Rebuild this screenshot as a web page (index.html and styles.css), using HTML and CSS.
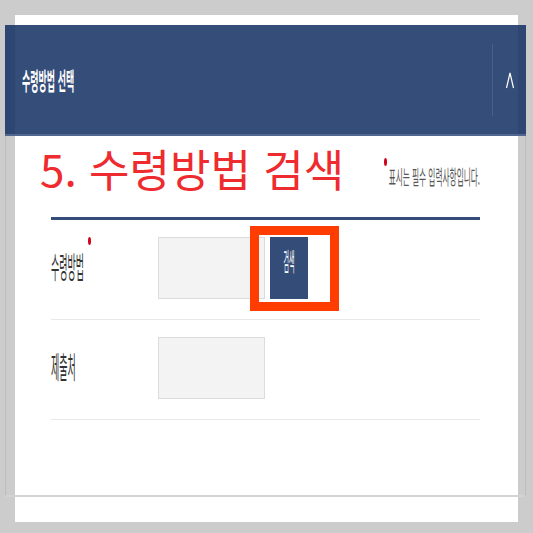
FILE: index.html
```html
<!DOCTYPE html>
<html lang="ko">
<head>
    <meta charset="UTF-8">
    <meta name="viewport" content="width=device-width, initial-scale=1.0">
    <title>수령방법 선택</title>
    <link rel="stylesheet" href="styles.css">
</head>
<body>
    <div class="sheet">
        <div class="panel">
            <div class="panel-header">
                <h2 class="tall header-title"><span>수령방법 선택</span></h2>
                <button class="toggle" type="button" aria-label="접기">
                    <svg width="10" height="20" viewBox="0 0 10 20">
                        <polyline points="1.5,18 5,3 8.5,18" fill="none" stroke="#ffffff" stroke-width="1.2"/>
                    </svg>
                </button>
            </div>

            <div class="panel-body">
                <div class="title-row">
                    <h1 class="step-title">5. 수령방법 검색</h1>
                    <p class="note">
                        <span class="req-dot"></span>
                        <span class="tall note-text"><span>표시는 필수 입력사항입니다.</span></span>
                    </p>
                </div>

                <div class="form">
                    <div class="form-row">
                        <div class="label">
                            <span class="tall label-text"><span>수령방법</span></span>
                            <span class="req-dot label-dot"></span>
                        </div>
                        <div class="field"></div>
                        <div class="search-wrap">
                            <button class="search-btn" type="button">
                                <span class="tall btn-text"><span>검색</span></span>
                            </button>
                            <span class="callout"></span>
                        </div>
                    </div>
                    <div class="form-row">
                        <div class="label">
                            <span class="tall label-text"><span>제출처</span></span>
                        </div>
                        <div class="field"></div>
                    </div>
                </div>
            </div>
        </div>
    </div>
</body>
</html>
```

FILE: styles.css
```css
body {
    margin: 0;
    background-color: #cccccc;
    font-family: "Noto Sans CJK KR", "Noto Sans", sans-serif;
}
.sheet {
    margin: 15px 0 0 15px;
    width: 503px;
    height: 507px;
    padding-top: 10px;
    box-sizing: border-box;
    background-color: #ffffff;
}
.panel {
    margin: 0 -8px 0 -10px;
}

/* narrow, tall text: small font stretched vertically */
.tall {
    display: inline-block;
    white-space: nowrap;
    line-height: 1.1;
}
.tall > span {
    display: inline-block;
}

.panel-header {
    display: flex;
    align-items: center;
    height: 111px;
    box-sizing: border-box;
    border-bottom: 2px solid #52678f;
    background-color: rgba(20, 48, 99, 0.86);
}
.header-title {
    margin: 4px 0 0 17px;
    font-size: 9px;
    font-weight: bold;
    color: #ffffff;
}
.header-title > span {
    transform: scaleY(2.7);
}
.toggle {
    margin-left: auto;
    width: 34px;
    height: 72px;
    padding: 0 0 0 1px;
    border: none;
    border-left: 1px solid rgba(255, 255, 255, 0.1);
    background: transparent;
    display: flex;
    align-items: center;
    justify-content: center;
}

.panel-body {
    height: 361px;
    box-sizing: border-box;
    border-left: 1px solid #bdbdbd;
    border-right: 1px solid #bdbdbd;
    border-bottom: 2px solid #d3d3d3;
}
.title-row {
    display: flex;
    align-items: flex-end;
    justify-content: space-between;
    padding: 10px 45px 0 34px;
}
.step-title {
    margin: 0;
    font-size: 44px;
    font-weight: normal;
    line-height: 1;
    color: #ee2b2e;
}
.note {
    display: flex;
    align-items: flex-start;
    margin: 0 0 8px 0;
}
.note .req-dot {
    margin: -16px 2px 0 0;
}
.note-text {
    font-size: 7.7px;
    color: #555555;
}
.note-text > span {
    transform: scaleY(2.6);
}
.req-dot {
    display: inline-block;
    width: 3px;
    height: 8px;
    border-radius: 50%;
    background-color: #d0021b;
}

.form {
    margin: 27px 45px 0 45px;
    border-top: 3px solid #344c78;
}
.form-row {
    display: flex;
    align-items: center;
    height: 100px;
    padding-bottom: 4px;
    box-sizing: border-box;
    border-bottom: 1px solid #e8e8e8;
}
.label {
    display: flex;
    align-items: flex-start;
    width: 107px;
}
.label-text {
    font-size: 9px;
    color: #333333;
}
.label-text > span {
    transform: scaleY(3.3);
}
.label-dot {
    margin: -26px 0 0 4px;
}
.field {
    width: 107px;
    height: 62px;
    box-sizing: border-box;
    border: 1px solid #dcdcdc;
    background-color: #f3f3f3;
}
.search-wrap {
    position: relative;
    margin-left: 5px;
}
.search-btn {
    display: flex;
    align-items: center;
    justify-content: center;
    width: 38px;
    height: 62px;
    padding: 0 0 6px 0;
    border: none;
    background-color: #344c78;
}
.btn-text {
    font-family: "Noto Sans CJK KR", sans-serif;
    font-size: 6px;
    color: #ffffff;
}
.btn-text > span {
    transform: scaleY(4.2);
}
.callout {
    position: absolute;
    top: -11px;
    right: -31px;
    bottom: -12px;
    left: -20px;
    border: 9px solid #ff3d00;
}
```
